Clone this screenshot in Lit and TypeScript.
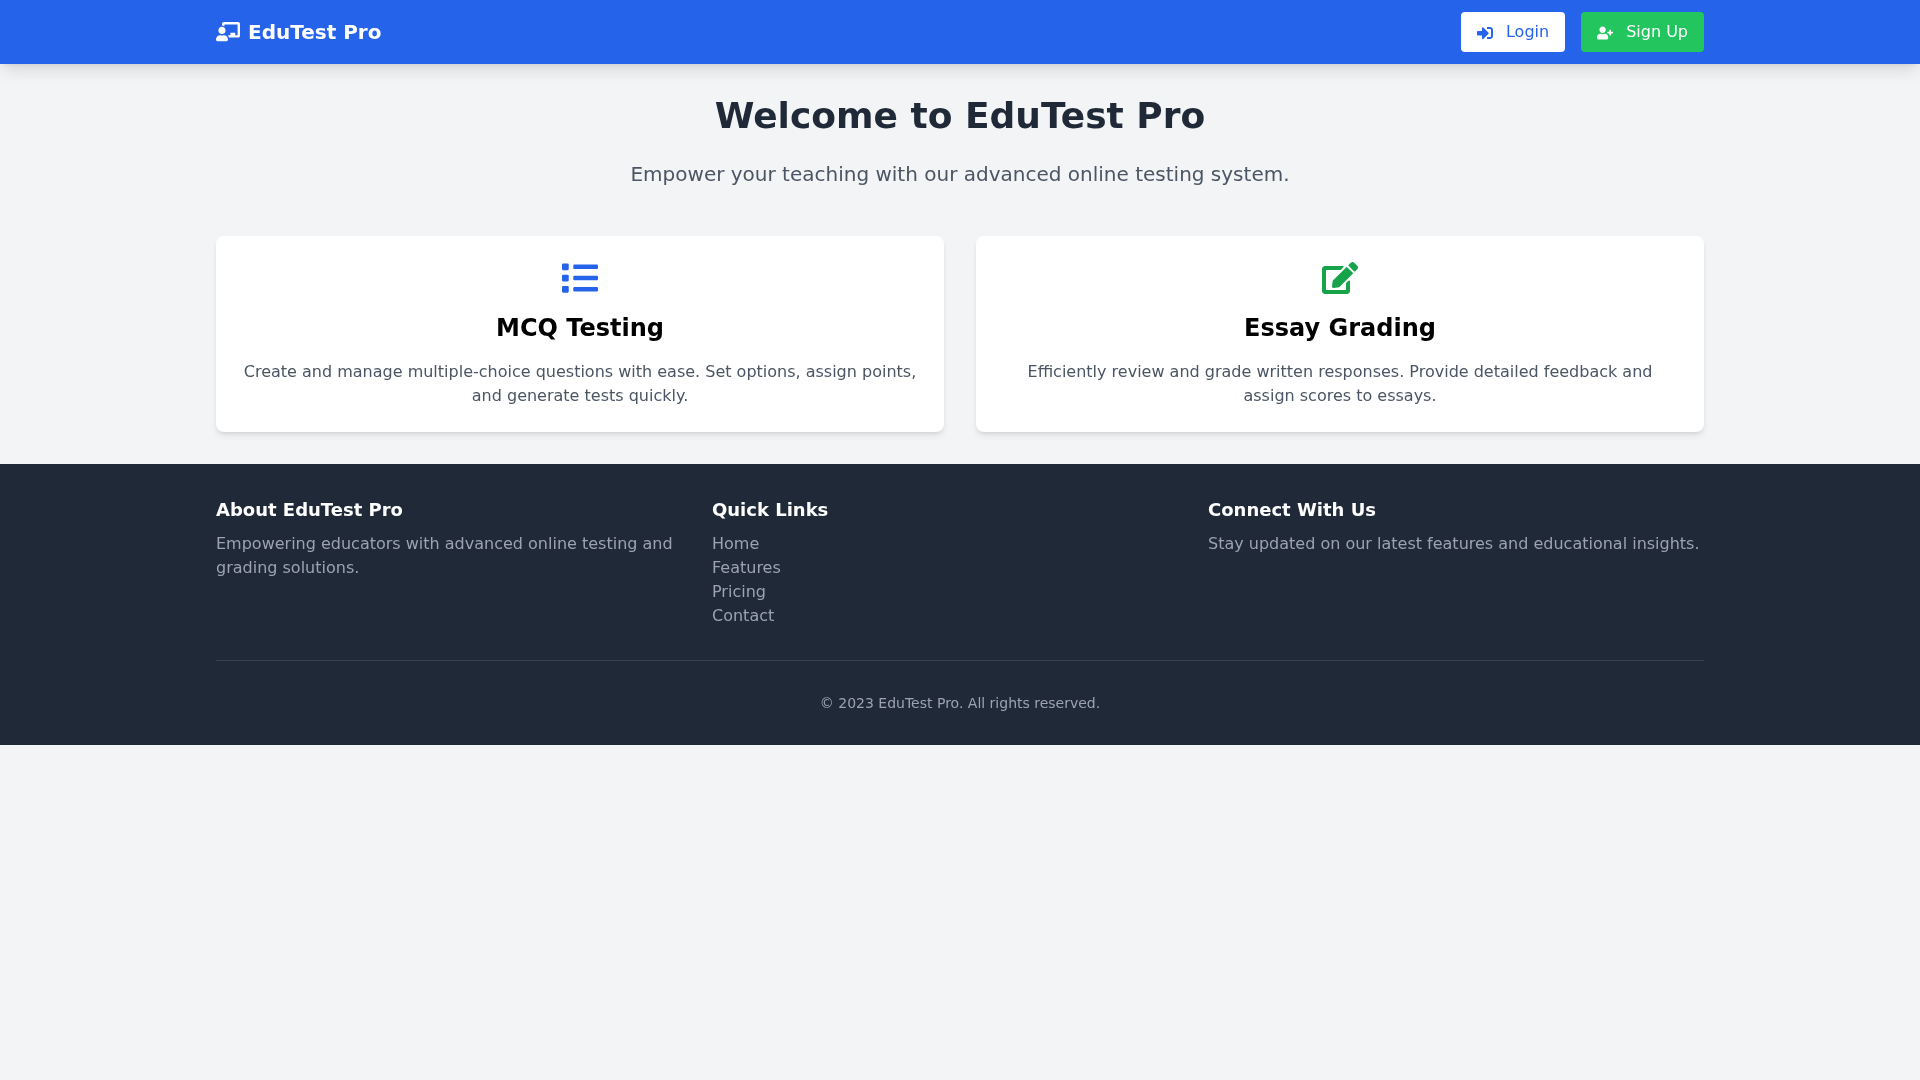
import { LitElement, html, css, svg } from "lit";
import { customElement } from "lit/decorators.js";

const icon = (cls: string, box: string, d: string) =>
  html`<svg class=${cls} viewBox=${box} aria-hidden="true">${svg`<path fill="currentColor" d=${d}></path>`}</svg>`;

const TEACHER = "M208 352c-2.39 0-4.78.35-7.06 1.09C187.98 357.3 174.35 360 160 360c-14.35 0-27.98-2.7-40.95-6.91-2.28-.74-4.66-1.09-7.05-1.09C49.94 352-.33 402.48 0 464.62.14 490.88 21.73 512 48 512h224c26.27 0 47.86-21.12 48-47.38.33-62.14-49.94-112.62-112-112.62zm-48-32c53.02 0 96-42.98 96-96s-42.98-96-96-96-96 42.98-96 96 42.98 96 96 96zM592 0H208c-26.47 0-48 22.25-48 49.59V96c23.42 0 45.1 6.78 64 17.8V64h352v288h-64v-64H384v64h-76.24c19.1 16.69 33.12 38.73 39.69 64H592c26.47 0 48-22.25 48-49.59V49.59C640 22.25 618.47 0 592 0z";
const SIGNIN = "M416 448h-84c-6.6 0-12-5.4-12-12v-40c0-6.6 5.4-12 12-12h84c17.7 0 32-14.3 32-32V160c0-17.7-14.3-32-32-32h-84c-6.6 0-12-5.4-12-12V76c0-6.6 5.4-12 12-12h84c53 0 96 43 96 96v192c0 53-43 96-96 96zm-47-201L201 79c-15-15-41-4.5-41 17v96H24c-13.3 0-24 10.7-24 24v96c0 13.3 10.7 24 24 24h136v96c0 21.5 26 32 41 17l168-168c9.3-9.4 9.3-24.6 0-34z";
const USERPLUS = "M624 208h-64v-64c0-8.8-7.2-16-16-16h-32c-8.8 0-16 7.2-16 16v64h-64c-8.8 0-16 7.2-16 16v32c0 8.8 7.2 16 16 16h64v64c0 8.8 7.2 16 16 16h32c8.8 0 16-7.2 16-16v-64h64c8.8 0 16-7.2 16-16v-32c0-8.8-7.2-16-16-16zm-400 48c70.7 0 128-57.3 128-128S294.7 0 224 0 96 57.3 96 128s57.3 128 128 128zm89.6 32h-16.7c-22.2 10.2-46.9 16-72.9 16s-50.6-5.8-72.9-16h-16.7C60.2 288 0 348.2 0 422.4V464c0 26.5 21.5 48 48 48h352c26.5 0 48-21.5 48-48v-41.6c0-74.2-60.2-134.4-134.4-134.4z";
const LIST = "M80 368H16a16 16 0 0 0-16 16v64a16 16 0 0 0 16 16h64a16 16 0 0 0 16-16v-64a16 16 0 0 0-16-16zm0-320H16A16 16 0 0 0 0 64v64a16 16 0 0 0 16 16h64a16 16 0 0 0 16-16V64a16 16 0 0 0-16-16zm0 160H16a16 16 0 0 0-16 16v64a16 16 0 0 0 16 16h64a16 16 0 0 0 16-16v-64a16 16 0 0 0-16-16zm416 176H176a16 16 0 0 0-16 16v32a16 16 0 0 0 16 16h320a16 16 0 0 0 16-16v-32a16 16 0 0 0-16-16zm0-320H176a16 16 0 0 0-16 16v32a16 16 0 0 0 16 16h320a16 16 0 0 0 16-16V80a16 16 0 0 0-16-16zm0 160H176a16 16 0 0 0-16 16v32a16 16 0 0 0 16 16h320a16 16 0 0 0 16-16v-32a16 16 0 0 0-16-16z";
const EDIT = "M402.6 83.2l90.2 90.2c3.8 3.8 3.8 10 0 13.8L274.4 405.6l-92.8 10.3c-12.4 1.4-22.9-9.1-21.5-21.5l10.3-92.8L388.8 83.2c3.8-3.8 10-3.8 13.8 0zm162-22.9l-48.8-48.8c-15.2-15.2-39.9-15.2-55.2 0l-35.4 35.4c-3.8 3.8-3.8 10 0 13.8l90.2 90.2c3.8 3.8 10 3.8 13.8 0l35.4-35.4c15.2-15.3 15.2-40 0-55.2zM384 346.2V448H64V128h229.8c3.2 0 6.2-1.3 8.5-3.5l40-40c7.6-7.6 2.2-20.5-8.5-20.5H48C21.5 64 0 85.5 0 112v352c0 26.5 21.5 48 48 48h352c26.5 0 48-21.5 48-48V306.2c0-10.7-12.9-16-20.5-8.5l-40 40c-2.2 2.3-3.5 5.3-3.5 8.5z";

@customElement("app-root")
export class AppRoot extends LitElement {
  static styles = css`
    :host {
      display: block;
      min-height: 1080px;
      background: #f3f4f6;
      font-family: "DejaVu Sans", sans-serif;
      font-size: 16px;
      line-height: 24px;
    }
    * { box-sizing: border-box; }
    h1, h2, h3, p, ul { margin: 0; padding: 0; }
    ul { list-style: none; }
    a { color: inherit; text-decoration: none; }
    svg { display: block; flex: none; }
    .page { will-change: opacity; }
    .container { width: 1536px; margin: 0 auto; padding: 0 24px; }
    header {
      position: relative;
      background: #2563eb;
      color: #fff;
      box-shadow: 0 10px 15px -3px rgba(0,0,0,.1), 0 4px 6px -4px rgba(0,0,0,.1);
    }
    .bar { display: flex; align-items: center; justify-content: space-between; height: 64px; }
    .logo { display: flex; align-items: center; font-size: 20px; line-height: 28px; font-weight: 700; }
    .logo svg { width: 24px; height: 19.2px; margin-right: 8px; }
    .actions { display: flex; gap: 16px; }
    .btn {
      display: flex;
      align-items: center;
      height: 40px;
      padding: 0 16px;
      border-radius: 4px;
    }
    .btn svg { width: 16px; height: 16px; margin-right: 13px; margin-top: 2px; }
    .login { background: #fff; color: #2563eb; }
    .signup { background: #22c55e; color: #fff; }
    main { padding: 32px 0; }
    .hero { text-align: center; margin-bottom: 48px; }
    h1 { font-size: 36px; line-height: 40px; font-weight: 700; color: #1f2937; margin-bottom: 24px; }
    .hero p { font-size: 20px; line-height: 28px; color: #4b5563; }
    .cards { display: grid; grid-template-columns: 1fr 1fr; gap: 32px; }
    .card {
      background: #fff;
      border-radius: 8px;
      padding: 24px;
      text-align: center;
      box-shadow: 0 4px 6px -1px rgba(0,0,0,.1), 0 2px 4px -2px rgba(0,0,0,.1);
    }
    .card svg { width: 36px; height: 36px; margin: 0 auto 16px; }
    .i-list { color: #2563eb; }
    .i-edit { color: #16a34a; }
    .card h2 { font-size: 24px; line-height: 32px; font-weight: 700; color: #000; margin-bottom: 16px; }
    .card p { color: #4b5563; }
    footer { background: #1f2937; color: #fff; padding: 32px 0; }
    .cols { display: grid; grid-template-columns: repeat(3, 1fr); }
    .cols h3 { font-size: 18px; line-height: 28px; font-weight: 700; margin-bottom: 8px; }
    .cols p, .cols a { color: #9ca3af; }
    .copy {
      margin-top: 32px;
      padding-top: 32px;
      border-top: 1px solid #374151;
      text-align: center;
      font-size: 14px;
      line-height: 20px;
      color: #9ca3af;
    }
  `;

  render() {
    return html`
      <div class="page">
      <header>
        <div class="container bar">
          <div class="logo">${icon("", "0 0 640 512", TEACHER)}<span>EduTest Pro</span></div>
          <div class="actions">
            <a class="btn login" href="#">${icon("", "0 0 512 512", SIGNIN)}<span>Login</span></a>
            <a class="btn signup" href="#">${icon("", "0 -64 640 640", USERPLUS)}<span>Sign Up</span></a>
          </div>
        </div>
      </header>
      <main>
        <div class="container">
          <section class="hero">
            <h1>Welcome to EduTest Pro</h1>
            <p>Empower your teaching with our advanced online testing system.</p>
          </section>
          <section class="cards">
            <article class="card">
              ${icon("i-list", "0 0 512 512", LIST)}
              <h2>MCQ Testing</h2>
              <p>Create and manage multiple-choice questions with ease. Set options, assign points, and generate tests quickly.</p>
            </article>
            <article class="card">
              ${icon("i-edit", "0 -32 576 576", EDIT)}
              <h2>Essay Grading</h2>
              <p>Efficiently review and grade written responses. Provide detailed feedback and assign scores to essays.</p>
            </article>
          </section>
        </div>
      </main>
      <footer>
        <div class="container">
          <div class="cols">
            <div>
              <h3>About EduTest Pro</h3>
              <p>Empowering educators with advanced online testing and grading solutions.</p>
            </div>
            <div>
              <h3>Quick Links</h3>
              <ul>
                <li><a href="#">Home</a></li>
                <li><a href="#">Features</a></li>
                <li><a href="#">Pricing</a></li>
                <li><a href="#">Contact</a></li>
              </ul>
            </div>
            <div>
              <h3>Connect With Us</h3>
              <p>Stay updated on our latest features and educational insights.</p>
            </div>
          </div>
          <div class="copy">© 2023 EduTest Pro. All rights reserved.</div>
        </div>
      </footer>
      </div>
    `;
  }
}
